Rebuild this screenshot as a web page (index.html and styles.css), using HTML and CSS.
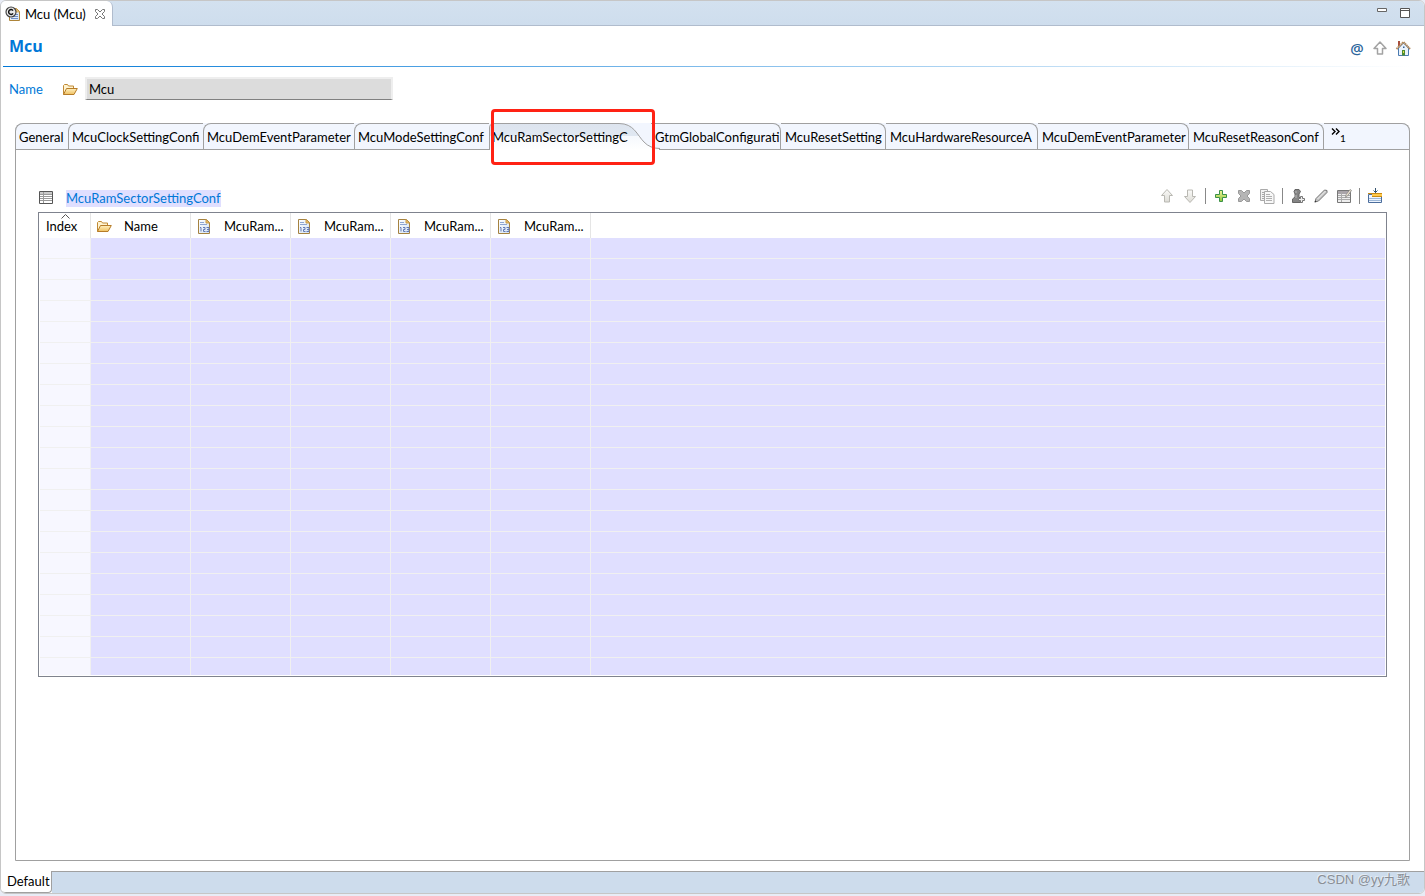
FILE: index.html
```html
<!DOCTYPE html>
<html lang="en">
<head>
<meta charset="utf-8">
<title>Mcu (Mcu)</title>
<link rel="stylesheet" href="styles.css">
</head>
<body>
<svg class="defs" width="0" height="0" aria-hidden="true">
  <defs>
    <linearGradient id="g-folder" x1="0" y1="0" x2="0" y2="1"><stop offset="0" stop-color="#fff0c0"/><stop offset="1" stop-color="#efc060"/></linearGradient>
    <linearGradient id="g-tab" x1="0" y1="0" x2="0" y2="1"><stop offset="0" stop-color="#dde4ee"/><stop offset="0.46" stop-color="#e0e8f2"/><stop offset="0.47" stop-color="#f5f8fd"/><stop offset="1" stop-color="#ffffff"/></linearGradient>
    <linearGradient id="g-plus" x1="0" y1="0" x2="0" y2="1"><stop offset="0" stop-color="#f4f59a"/><stop offset="1" stop-color="#8cc63e"/></linearGradient>
    <linearGradient id="g-arrow" x1="0" y1="0" x2="0" y2="1"><stop offset="0" stop-color="#fafaf8"/><stop offset="1" stop-color="#dddcd6"/></linearGradient>
    <linearGradient id="g-page" x1="0" y1="0" x2="1" y2="1"><stop offset="0" stop-color="#ffffff"/><stop offset="1" stop-color="#d3e2f5"/></linearGradient>
  </defs>
  <symbol id="i-folder" viewBox="0 0 16 16">
    <path d="M1.500 13.500V4.500l1-1h3l1 1.500h5v2.500" fill="#fff3d0" stroke="#c08a35"/>
    <path d="M1.500 13.500l3-6h10.800l-3.300 6z" fill="url(#g-folder)" stroke="#b67c28" stroke-linejoin="round"/>
  </symbol>
  <symbol id="i-page" viewBox="0 0 16 16">
    <path d="M2.500 1.500h8l3 3v11h-11z" fill="url(#g-page)" stroke="#a58240"/>
    <path d="M10 1.500v3.500h3.500z" fill="#f1c36c" stroke="#c79a4a"/>
    <path d="M4 4.500h4M4 6.500h7" stroke="#8fa6d2"/>
    <path d="M4 9.500h1v4M7 9.500h2v2h-1.500v2h2M10.500 9.500h2.500v4h-2.500M11 11.500h2" fill="none" stroke="#6279b6"/>
  </symbol>
</svg>

<div class="window">
  <header class="editor-tabs">
    <div class="editor-tab">
      <svg class="icon" viewBox="0 0 16 16">
        <path d="M4.500 5v9.500h10v-9l-3-3H9" fill="url(#g-page)" stroke="#ad8439"/>
        <path d="M11 2.500v3.500h3.500z" fill="#f4ce82" stroke="#c89b46" stroke-width=".7"/>
        <path d="M10 8.500h3M7 10.500h6M6 12.500h7" stroke="#6f8fc8"/>
        <circle cx="6" cy="6" r="5" fill="#e8e8e8" stroke="#444" stroke-width="1.200"/>
        <path d="M8 4.600A2.400 2.400 0 1 0 8 7.400" fill="none" stroke="#111" stroke-width="1.500"/>
      </svg>
      <span>Mcu (Mcu)</span>
      <button class="bare close" aria-label="Close">
        <svg width="12" height="12" viewBox="0 0 12 12"><path d="M1.500 1.500h2l2.500 2.500 2.500-2.500h2v2L8 6l2.500 2.500v2h-2L6 8l-2.500 2.500h-2v-2L4 6 1.500 3.500z" fill="#fff" stroke="#777"/></svg>
      </button>
    </div>
    <div class="window-buttons">
      <button class="bare" aria-label="Minimize"><svg width="12" height="12" viewBox="0 0 12 12"><path d="M1.500 2.500h9v3h-9z" fill="#fff" stroke="#666"/></svg></button>
      <button class="bare" aria-label="Maximize"><svg width="12" height="12" viewBox="0 0 12 12"><path d="M1.500 2.500h9v9h-9zM1.500 4.500h9" fill="#fff" stroke="#555"/></svg></button>
    </div>
  </header>

  <div class="form-head">
    <h1>Mcu</h1>
    <div class="head-tools">
      <button class="bare at" aria-label="Annotations">@</button>
      <button class="bare" aria-label="Up"><svg class="icon" viewBox="0 0 16 16"><path d="M8 2l6 6.500h-3.500V14h-5V8.500H2z" fill="#fff" stroke="#a3a3a3" stroke-width="1.500" stroke-linejoin="round"/></svg></button>
      <button class="bare" aria-label="Home"><svg class="icon" viewBox="0 0 16 16">
        <path d="M3 1h2v5H3z" fill="#a84f3d"/>
        <path d="M3.500 8v7.500h10V8l-5-5z" fill="#e9f2fc" stroke="#4a7ab0"/>
        <path d="M1.500 9l7-7 6.500 7" fill="none" stroke="#b08658" stroke-width="2" stroke-dasharray="1.500 .5"/>
        <path d="M7 10h3v5.500H7z" fill="#4c8b35"/><path d="M8 11h1v2H8z" fill="#e2df42"/><path d="M8 6.500h1.500V8H8z" fill="#315f97"/>
      </svg></button>
    </div>
  </div>

  <div class="name-row">
    <label for="name">Name</label>
    <svg class="icon"><use href="#i-folder"/></svg>
    <input id="name" type="text" value="Mcu" readonly>
  </div>

  <main class="folder">
    <nav class="tabs">
      <button class="tab before">General</button>
      <button class="tab before">McuClockSettingConfi</button>
      <button class="tab before">McuDemEventParameter</button>
      <button class="tab before">McuModeSettingConf</button>
      <button class="tab selected">
        <svg class="tab-shape" width="172" height="27" viewBox="0 0 172 27">
          <path d="M1 27V5Q1 .5 5 .5H130C145 .5 148 12 155 19Q161 25.500 170 25.500V27z" fill="url(#g-tab)"/>
          <path d="M.5 26V5Q.5 .5 5 .5H130C145 .5 148 12 155 19Q161 25.500 171 25.500" fill="none" stroke="#a0a0a0"/>
        </svg>
        <span>McuRamSectorSettingC</span>
        <span class="marker"></span>
      </button>
      <button class="tab after">GtmGlobalConfigurati</button>
      <button class="tab after">McuResetSetting</button>
      <button class="tab after">McuHardwareResourceA</button>
      <button class="tab after">McuDemEventParameter</button>
      <button class="tab after">McuResetReasonConf</button>
      <button class="tab more" aria-label="Show 1 more tab"><svg width="9" height="7" viewBox="0 0 9 7"><path d="M1 .5l3 3-3 3M5 .5l3 3-3 3" fill="none" stroke="#000" stroke-width="1.400"/></svg><span>1</span></button>
    </nav>

    <section class="panel">
      <div class="panel-head">
        <svg class="icon" viewBox="0 0 16 16"><path d="M1.500 1.500h13v12h-13z" fill="#fff" stroke="#555"/><path d="M2 2h12v2H2z" fill="#c9c9c9"/><path d="M2 4.500h12M2 6.500h12M2 8.500h12M2 10.500h12M5.500 2v11" stroke="#999"/></svg>
        <h2>McuRamSectorSettingConf</h2>
        <div class="toolbar">
          <button class="bare" aria-label="Move up"><svg class="icon" viewBox="0 0 16 16"><path d="M8 1.500l5.500 6h-3v6.500h-5V7.500h-3z" fill="url(#g-arrow)" stroke="#b9b8b2" stroke-linejoin="round"/></svg></button>
          <button class="bare" aria-label="Move down"><svg class="icon" viewBox="0 0 16 16"><path d="M8 14.500l5.500-6h-3V2h-5v6.500h-3z" fill="url(#g-arrow)" stroke="#b9b8b2" stroke-linejoin="round"/></svg></button>
          <span class="sep"></span>
          <button class="bare" aria-label="Add"><svg class="icon" viewBox="0 0 16 16"><path d="M6.500 2.500h3v4h4v3h-4v4h-3v-4h-4v-3h4z" fill="url(#g-plus)" stroke="#3b9148"/></svg></button>
          <button class="bare" aria-label="Delete"><svg class="icon" viewBox="0 0 16 16"><path d="M2.500 2.500h3L8 5l2.500-2.500h3v3L11 8l2.500 2.500v3h-3L8 11l-2.500 2.500h-3v-3L5 8 2.500 5.500z" fill="#b5b5b5" stroke="#999"/></svg></button>
          <button class="bare" aria-label="Duplicate"><svg class="icon" viewBox="0 0 16 16"><path d="M1.500 1.500h7v11h-7z" fill="#f3f3f3" stroke="#aaa"/><path d="M3 4.500h2M3 6.500h2M3 8.500h2M3 10.500h2" stroke="#aaa"/><path d="M5.500 3.500h6l3.500 3v9H5.500z" fill="#f8f8f8" stroke="#aaa"/><path d="M7 6.500h4M7 8.500h6M7 10.500h6M7 12.500h6" stroke="#b0b0b0"/></svg></button>
          <span class="sep"></span>
          <button class="bare" aria-label="Add user value"><svg class="icon" viewBox="0 0 16 16"><path d="M5 1.500h4l1.500 2L9 6v3l2 2v3.500H2.500V11L5 9V6L4 3.500z" fill="#858585" stroke="#666"/><path d="M6 3v2M6 7v3" stroke="#bbb"/><path d="M10.500 8.500h2v2h2v2h-2v2h-2v-2h-2v-2h2z" fill="#eee" stroke="#777"/></svg></button>
          <button class="bare" aria-label="Edit"><svg class="icon" viewBox="0 0 16 16"><path d="M2 14l1-3.500L11.500 2 14 2.500v2L5.500 13z" fill="#c6c6c6" stroke="#777"/><path d="M4.500 11l8-8" stroke="#eee"/><path d="M1.500 14.500l2-.7-1.300-1.300z" fill="#333"/></svg></button>
          <button class="bare" aria-label="Edit table"><svg class="icon" viewBox="0 0 16 16"><path d="M1.500 2.500h13v12h-13z" fill="#eee" stroke="#777"/><path d="M2 3h12v3H2z" fill="#a9a4a9"/><path d="M2 7.500h12M2 9.500h12M2 11.500h12M5.500 4v10" stroke="#aaa"/><path d="M9.500 9.500l.7-3L14 1.500l1.500 1-4 5.500z" fill="#eee3d0" stroke="#888" stroke-width=".8"/></svg></button>
          <span class="sep"></span>
          <button class="bare" aria-label="Insert row"><svg class="icon" viewBox="0 0 16 16"><path d="M1.500 6.500h13v8h-13z" fill="#eef5ff" stroke="#4b6d9c"/><path d="M2 10.500h12M2 12.500h12" stroke="#9db8d8"/><path d="M1 5.500h14M5 8.500h10" stroke="#c88a12"/><path d="M5 7h10" stroke="#ffc84a" stroke-width="2"/><path d="M8.500 0v5M6.500 2.500l2 2 2-2" fill="none" stroke="#34536f"/></svg></button>
        </div>
      </div>

      <div class="grid-box">
        <table>
          <colgroup><col class="c-index"><col class="c-data"><col class="c-data"><col class="c-data"><col class="c-data"><col class="c-data"><col></colgroup>
          <thead>
            <tr>
              <th class="index-head"><svg class="sort" width="9" height="5" viewBox="0 0 9 5"><path d="M.5 4.500l4-4 4 4" fill="none" stroke="#555"/></svg>Index</th>
              <th><div class="cell"><svg class="icon"><use href="#i-folder"/></svg><span>Name</span></div></th>
              <th><div class="cell"><svg class="icon"><use href="#i-page"/></svg><span>McuRam...</span></div></th>
              <th><div class="cell"><svg class="icon"><use href="#i-page"/></svg><span>McuRam...</span></div></th>
              <th><div class="cell"><svg class="icon"><use href="#i-page"/></svg><span>McuRam...</span></div></th>
              <th><div class="cell"><svg class="icon"><use href="#i-page"/></svg><span>McuRam...</span></div></th>
              <th class="rest"></th>
            </tr>
          </thead>
          <tbody>
            <tr><td></td><td></td><td></td><td></td><td></td><td></td><td></td></tr>
            <tr><td></td><td></td><td></td><td></td><td></td><td></td><td></td></tr>
            <tr><td></td><td></td><td></td><td></td><td></td><td></td><td></td></tr>
            <tr><td></td><td></td><td></td><td></td><td></td><td></td><td></td></tr>
            <tr><td></td><td></td><td></td><td></td><td></td><td></td><td></td></tr>
            <tr><td></td><td></td><td></td><td></td><td></td><td></td><td></td></tr>
            <tr><td></td><td></td><td></td><td></td><td></td><td></td><td></td></tr>
            <tr><td></td><td></td><td></td><td></td><td></td><td></td><td></td></tr>
            <tr><td></td><td></td><td></td><td></td><td></td><td></td><td></td></tr>
            <tr><td></td><td></td><td></td><td></td><td></td><td></td><td></td></tr>
            <tr><td></td><td></td><td></td><td></td><td></td><td></td><td></td></tr>
            <tr><td></td><td></td><td></td><td></td><td></td><td></td><td></td></tr>
            <tr><td></td><td></td><td></td><td></td><td></td><td></td><td></td></tr>
            <tr><td></td><td></td><td></td><td></td><td></td><td></td><td></td></tr>
            <tr><td></td><td></td><td></td><td></td><td></td><td></td><td></td></tr>
            <tr><td></td><td></td><td></td><td></td><td></td><td></td><td></td></tr>
            <tr><td></td><td></td><td></td><td></td><td></td><td></td><td></td></tr>
            <tr><td></td><td></td><td></td><td></td><td></td><td></td><td></td></tr>
            <tr><td></td><td></td><td></td><td></td><td></td><td></td><td></td></tr>
            <tr><td></td><td></td><td></td><td></td><td></td><td></td><td></td></tr>
            <tr class="last"><td></td><td></td><td></td><td></td><td></td><td></td><td></td></tr>
          </tbody>
        </table>
      </div>
    </section>
  </main>

  <footer class="page-tabs">
    <button class="page-tab">Default</button>
    <div class="page-bar"><span class="watermark">CSDN @yy九歌</span></div>
  </footer>
</div>
</body>
</html>
```

FILE: styles.css
```css
* { box-sizing: border-box; }

body {
  margin: 0;
  background: #e8ecf6;
  color: #000;
  font: 13px/18px Lato, "Noto Sans CJK SC", sans-serif;
}

button, input { font: inherit; color: inherit; }

.defs { position: absolute; }

.icon { display: block; flex: none; width: 16px; height: 16px; }

.bare { display: block; padding: 0; border: 0; background: none; }
.bare svg { display: block; }

.window {
  display: flex;
  flex-direction: column;
  min-height: calc(100vh - 2px);
  border: 1px solid #c6c6c6;
  border-radius: 6px;
  background: #fff;
  overflow: hidden;
}

.editor-tabs {
  display: flex;
  justify-content: space-between;
  height: 25px;
  background: linear-gradient(#d3e1ef, #cedded);
  box-shadow: inset 0 -1px #b0bccd;
}

.editor-tab {
  display: flex;
  align-items: center;
  gap: 4px;
  width: 112px;
  padding: 1px 0 0 4px;
  border-right: 1px solid #b0bccd;
  border-radius: 0 6px 0 0;
  background: #fff;
  white-space: nowrap;
}

.close { margin: 0 3px 0 auto; padding-right: 3px; }

.window-buttons {
  display: flex;
  align-items: flex-start;
  gap: 11px;
  padding: 5px 13px 0 0;
}

.form-head {
  display: flex;
  align-items: center;
  justify-content: space-between;
  height: 41px;
  margin: 0 13px 0 2px;
  padding: 0 0 0 6px;
  border-bottom: 1px solid;
  border-image: linear-gradient(90deg, #0078d7, #ffffff) 1;
}

h1 { margin: 0; color: #0078d7; font: 700 16px/20px "Open Sans", sans-serif; }

.head-tools { display: flex; align-items: center; gap: 7px; padding-top: 4px; }

.at { width: 16px; color: #2c659c; font: 600 15px/16px "Open Sans", sans-serif; }

.name-row {
  display: flex;
  align-items: center;
  height: 23px;
  margin: 10px 8px 0;
}

.name-row label { width: 53px; color: #0078d7; }

.name-row input {
  width: 308px;
  height: 23px;
  margin-left: 7px;
  padding: 0 2px;
  border: 2px solid #eee;
  border-bottom: 1px solid #808080;
  background: #dcdcdc;
  outline: 0;
}

.folder {
  display: flex;
  flex: 1;
  flex-direction: column;
  margin: 23px 14px 0;
  border: 1px solid #a0a0a0;
  border-radius: 8px 8px 0 0;
}

.tabs {
  display: grid;
  grid-template-columns: 53px 135px 151px 135px 162px 130px 105px 152px 151px 135px 1fr;
  grid-template-rows: 27px;
  margin: -1px -1px 0;
  border-radius: 8px 8px 0 0;
  background: #f2f6fe;
  box-shadow: inset 0 -1px #a0a0a0;
}

.tab {
  position: relative;
  padding: 0 3px;
  border: 0 solid #a0a0a0;
  background: none;
  text-align: left;
  white-space: nowrap;
}

.before { border-width: 1px 0 0 1px; border-radius: 8px 0 0 0; }
.after { padding-left: 4px; border-width: 1px 1px 0 0; border-radius: 0 8px 0 0; }

.tab-shape { position: absolute; left: 0; top: 0; }
.selected span { position: relative; }
.selected .marker {
  position: absolute;
  left: 2px;
  top: -14px;
  z-index: 2;
  width: 164px;
  height: 56px;
  border: 3px solid #ff2214;
  border-radius: 4px;
}

.more { display: flex; padding: 4px 7px; border-width: 1px 1px 0 0; border-radius: 0 8px 0 0; }
.more span { font-size: 10px; line-height: 20px; }

.panel { padding: 36px 22px 0; }

.panel-head { display: flex; align-items: center; height: 26px; padding-bottom: 2px; }

h2 {
  margin: 0 0 0 12px;
  background: #e0dfff;
  color: #0078d7;
  font-size: 13px;
  font-weight: 400;
  line-height: 17px;
}

.toolbar { display: flex; gap: 7px; margin-left: auto; padding: 0 4px 4px 0; }
.sep { width: 1px; background: #888; }

.grid-box { border: 1px solid #7f838e; padding: 0 1px 1px; }

table { width: 100%; border-collapse: separate; border-spacing: 0; table-layout: fixed; }
.c-index { width: 51px; }
.c-data { width: 100px; }

th {
  position: relative;
  height: 25px;
  padding: 0;
  border-right: 1px solid #e5e5e5;
  font-weight: 400;
  text-align: left;
}
.rest { border: 0; }
.index-head { padding-left: 6px; }
.sort { position: absolute; left: 21px; top: 1px; }
.cell { display: flex; align-items: center; gap: 12px; padding-left: 5px; white-space: nowrap; }

td {
  height: 21px;
  padding: 0;
  border: solid #f0f0f0;
  border-width: 0 1px 1px 0;
  background: #e0dfff;
}
td:first-child { background: #f7f7ff; }
td:last-child { border-right: 0; }
.last td { height: 17px; border-bottom: 0; }

.page-tabs { display: flex; height: 22px; margin-top: 10px; }

.page-tab {
  width: 51px;
  padding: 0 0 2px 6px;
  border: 0 solid #a0a0a0;
  border-width: 0 1px 1px 0;
  border-radius: 0 0 4px 4px;
  background: #fff;
  text-align: left;
}

.page-bar {
  flex: 1;
  padding-right: 14px;
  border-top: 1px solid #a0a0a0;
  background: #cddcec;
  text-align: right;
}

.watermark {
  display: block;
  color: #8a8f96;
  font: 13px/16px "Liberation Sans", "Noto Sans CJK SC", sans-serif;
  text-shadow: -1px -1px #e6edf5;
}
```
